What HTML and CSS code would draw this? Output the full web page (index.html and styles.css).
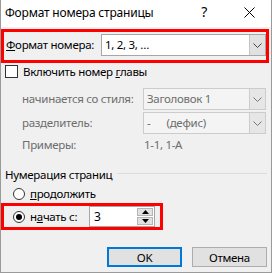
FILE: index.html
```html
<!DOCTYPE html>
<html lang="ru">
  <head>
    <meta charset="UTF-8" />
    <title>Формат номера страницы</title>
    <link rel="stylesheet" href="styles.css">
  </head>
  <body>
    <div class="window">
      <div class="titlebar">
        <span class="title">Формат номера страницы</span>
        <span class="help">?</span>
        <svg class="close" width="11" height="11" viewBox="0 0 11 11">
          <path d="M0.5 0.5 L10.5 10.5 M10.5 0.5 L0.5 10.5" stroke="#000" stroke-width="1" fill="none" />
        </svg>
      </div>

      <div class="content">
        <div class="mark format-row">
          <span class="label"><u>Ф</u>ормат номера:</span>
          <div class="combo wide">
            <span class="combo-text">1, 2, 3, …</span>
            <span class="combo-btn"><svg width="9" height="5" viewBox="0 0 9 5"><path d="M0.5 0.5 L4.5 4.5 L8.5 0.5" stroke="#444" fill="none" /></svg></span>
          </div>
        </div>

        <div class="check-row">
          <span class="checkbox"></span>
          <span>Включить номер <u>г</u>лавы</span>
        </div>

        <div class="field-row first">
          <span class="muted">начинается со стиля:</span>
          <div class="combo off">
            <span class="combo-text">Заголовок 1</span>
            <span class="combo-btn"><svg width="9" height="5" viewBox="0 0 9 5"><path d="M0.5 0.5 L4.5 4.5 L8.5 0.5" stroke="#777" fill="none" /></svg></span>
          </div>
        </div>
        <div class="field-row">
          <span class="muted">разделитель:</span>
          <div class="combo off">
            <span class="combo-text">-&nbsp;&nbsp;&nbsp;&nbsp;&nbsp;&nbsp;(дефис)</span>
            <span class="combo-btn"><svg width="9" height="5" viewBox="0 0 9 5"><path d="M0.5 0.5 L4.5 4.5 L8.5 0.5" stroke="#777" fill="none" /></svg></span>
          </div>
        </div>
        <div class="examples-row">
          <span class="muted">Примеры:</span>
          <span class="muted example">1-1, 1-А</span>
        </div>

        <div class="group-head">
          <span>Нумерация страниц</span>
          <span class="group-line"></span>
        </div>

        <div class="radio-row">
          <span class="radio"></span>
          <span><u>п</u>родолжить</span>
        </div>

        <div class="mark start-row">
          <span class="radio on"></span>
          <span class="start-label">н<u>а</u>чать с:</span>
          <div class="spin">
            <span class="spin-text">3</span>
            <span class="spin-btns">
              <span class="spin-btn"><svg width="7" height="4" viewBox="0 0 7 4"><path d="M0 4 L3.5 0 L7 4 Z" fill="#000" /></svg></span>
              <span class="spin-btn"><svg width="7" height="4" viewBox="0 0 7 4"><path d="M0 0 L3.5 4 L7 0 Z" fill="#000" /></svg></span>
            </span>
          </div>
        </div>

        <div class="buttons">
          <button class="btn default" type="button">OK</button>
          <button class="btn" type="button">Отмена</button>
        </div>
      </div>
    </div>
  </body>
</html>
```

FILE: styles.css
```css
* {
  box-sizing: border-box;
}

body {
  margin: 0;
  background: #ffffff;
  font-family: "Noto Sans", "DejaVu Sans", sans-serif;
  font-size: 11.5px;
  line-height: 16px;
  letter-spacing: -0.3px;
  color: #000000;
  white-space: nowrap;
}

u {
  text-decoration: underline;
  text-underline-offset: 1px;
}

.window {
  width: 272px;
  height: 273px;
  border: 1px solid #9a9a9a;
  border-top: none;
  background: #f0f0f0;
  display: flex;
  flex-direction: column;
  overflow: hidden;
}

.titlebar {
  height: 27px;
  flex: none;
  background: #ffffff;
  display: flex;
  align-items: center;
  padding-left: 5px;
  margin: 0 -1px;
}

.title {
  flex: 1;
  margin-top: -2px;
  font-size: 12px;
  letter-spacing: -0.2px;
}

.help {
  font-size: 14px;
  margin-right: 37px;
  margin-top: -3px;
}

.close {
  margin-right: 17px;
  margin-top: -3px;
}

.content {
  display: flex;
  flex-direction: column;
}

.mark {
  border: 3px solid #ff0000;
}

.format-row {
  margin-top: 2px;
  width: 268px;
  height: 34px;
  display: flex;
  align-items: flex-start;
  padding-top: 2px;
  padding-left: 2px;
}

.label {
  line-height: 22px;
}

.combo {
  height: 22px;
  flex: none;
  display: flex;
  border: 1px solid #adadad;
  background: #ffffff;
}

.combo.wide {
  margin-left: auto;
  width: 165px;
  border-color: #a6a6a6;
}

.combo-text {
  flex: 1;
  line-height: 20px;
  padding-left: 3px;
  overflow: hidden;
}

.combo-btn {
  width: 16px;
  display: flex;
  align-items: center;
  justify-content: center;
  background: #e1e1e1;
  border-left: 1px solid #c4c4c4;
}

.combo.off {
  width: 123px;
  background: #f4f4f4;
  border-color: #cccccc;
  color: #6d6d6d;
  margin-left: auto;
  margin-right: 5px;
}

.combo.off .combo-btn {
  background: #e6e6e6;
  border-left-color: #cccccc;
}

.check-row {
  margin-top: 2px;
  height: 13px;
  display: flex;
  align-items: center;
  gap: 5px;
  padding-left: 4px;
}

.checkbox {
  width: 13px;
  height: 13px;
  flex: none;
  border: 1px solid #333333;
  background: #ffffff;
}

.muted {
  color: #6d6d6d;
}

.field-row {
  margin-top: 2px;
  height: 22px;
  display: flex;
  align-items: center;
  padding-left: 21px;
}

.field-row.first {
  margin-top: 10px;
}

.examples-row {
  margin-top: 3px;
  height: 16px;
  display: flex;
  align-items: center;
  padding-left: 21px;
}

.example {
  margin-left: auto;
  width: 127px;
}

.group-head {
  margin-top: 14px;
  height: 16px;
  display: flex;
  align-items: center;
  padding-left: 4px;
  gap: 5px;
}

.group-line {
  flex: 1;
  height: 1px;
  background: #dcdcdc;
  margin-right: 4px;
  margin-top: -3px;
}

.radio-row {
  margin-top: 4px;
  height: 14px;
  display: flex;
  align-items: center;
  padding-left: 12px;
  gap: 5px;
}

.radio {
  width: 12px;
  height: 12px;
  border-radius: 50%;
  border: 1px solid #333333;
  background: #ffffff;
  display: flex;
  align-items: center;
  justify-content: center;
  flex: none;
}

.radio.on::after {
  content: "";
  width: 6px;
  height: 6px;
  border-radius: 50%;
  background: #000000;
}

.start-row {
  margin-top: 2px;
  width: 162px;
  height: 27px;
  display: flex;
  align-items: center;
  padding-left: 9px;
}

.start-label {
  margin-left: 5px;
  width: 59px;
}

.spin {
  height: 21px;
  width: 66px;
  flex: none;
  align-self: flex-start;
  display: flex;
  background: #ffffff;
  border: 1px solid #a6a6a6;
}

.spin-text {
  flex: 1;
  line-height: 19px;
  padding-left: 4px;
  font-size: 12px;
}

.spin-btns {
  width: 17px;
  display: flex;
  flex-direction: column;
  gap: 1px;
  padding: 1px 1px 1px 0;
}

.spin-btn {
  flex: 1;
  display: flex;
  align-items: center;
  justify-content: center;
  background: #e1e1e1;
  border: 1px solid #b5b5b5;
}

.buttons {
  margin-top: 17px;
  display: flex;
  justify-content: flex-end;
  gap: 10px;
  padding-right: 4px;
}

.btn {
  width: 75px;
  height: 20px;
  padding: 0;
  font-family: inherit;
  font-size: 11.5px;
  letter-spacing: -0.3px;
  color: #000000;
  background: #e1e1e1;
  border: 1px solid #adadad;
}

.btn.default {
  border: 2px solid #0078d7;
}
```
